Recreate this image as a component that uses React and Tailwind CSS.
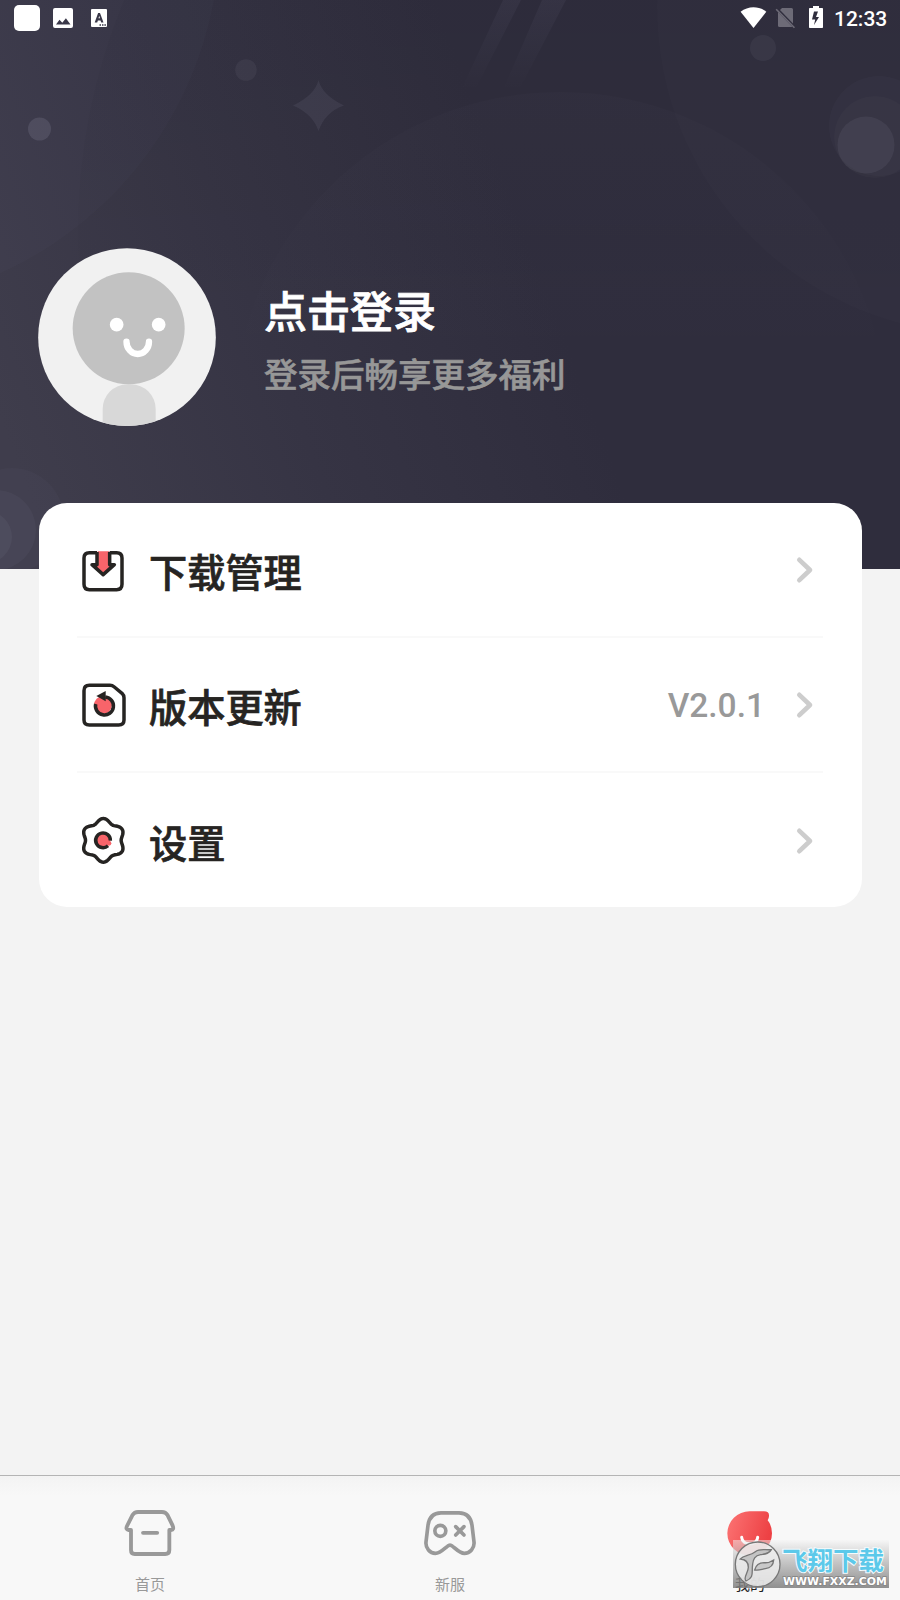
import React from "react";

const CJK = "font-['Roboto','Noto_Sans_CJK_SC',sans-serif]";

const gearPath =
  Array.from({ length: 120 }, (_, i) => {
    const a = (i / 120) * Math.PI * 2;
    const r = 59.5 + 6 * Math.cos(6 * a);
    const x = 130 + r * Math.sin(a);
    const y = 931 - r * Math.cos(a);
    return `${i ? "L" : "M"}${x.toFixed(1)} ${y.toFixed(1)}`;
  }).join("") + "Z";

function StatusBar() {
  return (
    <div className="relative flex h-9 items-center text-white">
      <svg className="ml-3.5 h-9 w-[100px]" viewBox="14 0 100 36" fill="#fff">
        <rect x="14" y="5" width="26" height="26" rx="5" />
        <path fillRule="evenodd" d="M55 8h16a2 2 0 0 1 2 2v16a2 2 0 0 1-2 2H55a2 2 0 0 1-2-2V10a2 2 0 0 1 2-2zM56 24.5h14.5l-4.6-6.3-3.6 4.6-2.8-3z" />
        <path fillRule="evenodd" d="M92 9h14a1 1 0 0 1 1 1v16a1 1 0 0 1-1 1H92a1 1 0 0 1-1-1V10a1 1 0 0 1 1-1zM94.700 22.500h2.500l.7-2h2.600l.7 2h2.300l-3.500-9.500h-1.900zM98.500 18.300l.7-2.500.8 2.500zM99.500 24.300v1.500h1.500v-1.500zM102 24.300v1.500h1.500v-1.500zM104.400 24.300v1.500h1.500v-1.500z" />
      </svg>
      <svg className="ml-auto h-9 w-[84px]" viewBox="740 0 84 36" fill="#fff">
        <path d="M740.600 11.700C748 5.700 759 5.700 766.300 11.700L753.500 28z" />
        <g fill="#6d6b77">
          <path d="M782 8h9.500a1.500 1.500 0 0 1 1.500 1.500V23.500L780 10z" />
          <path d="M778 12l14.500 15H779.500a1.500 1.500 0 0 1-1.500-1.500z" />
          <path d="M775.600 9.800l1.100-1L795 27.200l-1.100 1z" />
        </g>
        <path fillRule="evenodd" d="M813 6h6v2h3.200q.8 0 .8.800v18.400q0 .8-.8.800h-12.400q-.8 0-.8-.8V8.800q0-.8.800-.8h3.200zM814 11.500l-2 8h3.200l-1.200 5.500 5-8h-3l2-5.500z" />
      </svg>
      <span className="ml-2.5 mr-3 w-[54px] whitespace-nowrap pt-0.5 font-['Roboto',sans-serif] text-[21px] font-medium leading-6">12:33</span>
    </div>
  );
}

function Backdrop() {
  return (
    <svg className="absolute left-0 top-0 h-full w-full" viewBox="0 0 900 569">
      <defs>
        <linearGradient id="base" gradientUnits="userSpaceOnUse" x1="0" y1="420" x2="520" y2="220">
          <stop offset="0" stopColor="#3f3d4c" />
          <stop offset=".5" stopColor="#363444" />
          <stop offset="1" stopColor="#2f2d3d" />
        </linearGradient>
        <linearGradient id="stripe" x1="0" y1="0" x2="0" y2="1">
          <stop offset="0" stopColor="#d8d6ff" stopOpacity=".045" />
          <stop offset="1" stopColor="#d8d6ff" stopOpacity="0" />
        </linearGradient>
        <linearGradient id="disc" x1="0" y1="0" x2="0" y2="1">
          <stop offset="0" stopColor="#d8d6ff" stopOpacity=".014" />
          <stop offset=".45" stopColor="#d8d6ff" stopOpacity="0" />
        </linearGradient>
        <linearGradient id="shade" gradientUnits="userSpaceOnUse" x1="0" y1="0" x2="0" y2="330">
          <stop offset="0" stopColor="#000" stopOpacity=".035" />
          <stop offset=".6" stopColor="#000" stopOpacity=".025" />
          <stop offset="1" stopColor="#000" stopOpacity="0" />
        </linearGradient>
      </defs>
      <rect width="900" height="569" fill="url(#base)" />
      <circle cx="-153" cy="-67" r="373" fill="#d8d6ff" fillOpacity=".02" />
      <circle cx="676" cy="230" r="598" fill="url(#shade)" />
      <circle cx="560" cy="419" r="327" fill="url(#disc)" />
      <circle cx="983" cy="8" r="326" fill="#d8d6ff" fillOpacity=".012" />
      <path d="M503 0h18L476 88h-14zM542 0h24L518 92h-16z" fill="url(#stripe)" />
      <g fill="#e8e6ff">
        <circle cx="39.500" cy="129" r="11.500" fillOpacity=".11" />
        <circle cx="246" cy="70" r="10.800" fillOpacity=".05" />
        <circle cx="763" cy="48" r="13" fillOpacity=".05" />
        <path d="M318.500 80Q322 95 344 105.500Q325 112 318.500 131Q313 114 293 105.500Q315 95 318.500 80z" fillOpacity=".065" />
        <circle cx="879" cy="126" r="50" fillOpacity=".022" />
        <circle cx="875" cy="137" r="41" fillOpacity=".018" />
        <circle cx="866" cy="145" r="28.500" fillOpacity=".06" />
        <circle cx="12" cy="520" r="52" fillOpacity=".025" />
        <circle cx="-4" cy="530" r="40" fillOpacity=".035" />
        <circle cx="-14" cy="537" r="26" fillOpacity=".045" />
      </g>
    </svg>
  );
}

function Avatar() {
  return (
    <svg className="h-[178px] w-[178px] shrink-0" viewBox="115 53 534 534">
      <defs>
        <clipPath id="face"><circle cx="382" cy="320.500" r="266.500" /></clipPath>
      </defs>
      <g clipPath="url(#face)">
        <rect x="110" y="50" width="550" height="550" fill="#f1f1f1" />
        <rect x="309" y="462" width="159" height="200" rx="74" fill="#d8d8d8" />
        <circle cx="387" cy="294" r="168" fill="#c2c2c2" />
        <circle cx="351" cy="283" r="20.500" fill="#fff" />
        <circle cx="477" cy="283" r="20.500" fill="#fff" />
        <path d="M380.500 334a33.700 37 0 0 0 67.500 0" fill="none" stroke="#fff" strokeWidth="19" strokeLinecap="round" />
      </g>
    </svg>
  );
}

function DownloadIcon() {
  return (
    <svg className="h-[46px] w-[46px]" viewBox="60 51 138 138" fill="none" stroke="#262422" strokeWidth="10.500" strokeLinejoin="round">
      <path d="M113 64h34v42h12l-30 26-29-26h13z" fill="#f8646a" stroke="none" />
      <path d="M111 68H88Q72 68 72 84V163Q72 179 88 179H170Q186 179 186 163V84Q186 68 170 68H149" />
      <path d="M111 66V104H96L129.500 134L163 104H149V66" />
    </svg>
  );
}

function UpdateIcon() {
  return (
    <svg className="h-[46px] w-[46px]" viewBox="60 456 138 138" fill="none" stroke="#262422" strokeWidth="10.500" strokeLinejoin="round">
      <path d="M88 466H150Q157 466 163 471L186 490Q192 496 192 503V570Q192 585 176 585H88Q72 585 72 570V482Q72 466 88 466Z" />
      <circle cx="129" cy="525" r="27" fill="#f8646a" stroke="none" />
      <path d="M107 522A27 27 0 1 0 136 501" />
      <path d="M109 498L137 483V514Z" fill="#262422" stroke="none" />
    </svg>
  );
}

function SettingsIcon() {
  return (
    <svg className="h-[46px] w-[46px]" viewBox="60 864 138 138" overflow="visible" fill="none" stroke="#262422" strokeWidth="10.500" strokeLinejoin="round">
      <path d={gearPath} />
      <circle cx="129" cy="931" r="22" fill="#f8646a" stroke="none" />
      <circle cx="147" cy="940" r="7" fill="#f8646a" stroke="none" />
      <path d="M151 932A22 22 0 1 0 144 947" />
    </svg>
  );
}

function Chevron() {
  return (
    <svg className="ml-[30px] h-7 w-5" viewBox="464 77 60 84" fill="none" stroke="#cdcdcd" strokeWidth="14" strokeLinecap="round" strokeLinejoin="round">
      <path d="M477 88.500L509 119L477 149.500" />
    </svg>
  );
}

function Row({ icon, label, value, last }) {
  return (
    <div className={`flex h-[135px] items-center pl-[3px] pr-2 ${last ? "" : "border-b-2 border-[#f9f9f9]"}`}>
      {icon}
      <span className="ml-[23px] pt-2.5 text-[38.200px] font-medium leading-none text-[#262422] [-webkit-text-stroke:0.700px_#262422]">{label}</span>
      <span className="ml-auto pt-0.5 font-['Roboto',sans-serif] text-[33.500px] font-medium leading-none text-[#999]">{value}</span>
      <Chevron />
    </div>
  );
}

function HomeIcon() {
  return (
    <svg className="h-[50px] w-[54px]" viewBox="69 144 162 150" fill="none" stroke="#999" strokeWidth="11.500" strokeLinejoin="round" strokeLinecap="round">
      <path d="M114 156H186Q197 156 203 166L218 197Q223 209 213 210H208V270Q208 282 196 282H104Q93 282 93 270V210H86Q76 208 81 198L97 166Q103 156 114 156Z" />
      <path d="M129 218.500H171.500" />
    </svg>
  );
}

function GamepadIcon() {
  return (
    <svg className="h-[50px] w-[54px]" viewBox="969 144 162 150" fill="none" stroke="#999" strokeWidth="11" strokeLinejoin="round" strokeLinecap="round">
      <path d="M1023 158.500H1077C1100 158.500 1113 173 1116 196L1122 246C1124 265 1110 280 1093 280C1080 280 1068 267 1058 259Q1050 252 1042 259C1031 268 1020 280 1006 280C990 280 976 265 978 246L984 196C987 173 1000 158.500 1023 158.500Z" />
      <circle cx="1021" cy="212.500" r="16.500" />
      <path d="M1067 200L1092 225M1092 200L1067 225" />
    </svg>
  );
}

function MineIcon() {
  return (
    <svg className="h-[50px] w-[54px]" viewBox="69 84 162 150" fill="none">
      <defs>
        <linearGradient id="red" x1="0" y1="0" x2="1" y2="0.300">
          <stop offset="0" stopColor="#fc7474" />
          <stop offset="1" stopColor="#ed4144" />
        </linearGradient>
      </defs>
      <path d="M149 94H192Q208 94 207 108Q207 114 203 121Q216 137 216 160A67 66 0 1 1 149 94Z" fill="url(#red)" />
      <path d="M125 172C127 198 171 198 173 172" stroke="#fff" strokeWidth="9" strokeLinecap="round" />
    </svg>
  );
}

function Tab({ icon, label, active }) {
  return (
    <div className="flex flex-col items-center pt-8">
      {icon}
      <span className={`mt-4 text-[15px] leading-[22px] ${active ? "text-[#222]" : "text-[#999]"}`}>{label}</span>
    </div>
  );
}

function Watermark() {
  return (
    <div className="absolute left-[733px] top-[1540px] h-12 w-[156px] bg-linear-to-b from-[#f4f4f4]/50 to-[#7d7d7d]/85">
      <svg className="absolute left-0 top-0 h-12 w-12" viewBox="99 180 144 144" fill="none">
        <circle cx="173" cy="253" r="67" fill="#ededed" fillOpacity=".85" stroke="#777" strokeWidth="4" />
        <path d="M121 237C132 225 150 228 166 215C180 204 196 211 214 209C208 221 196 222 182 224C164 227 160 237 158 252C154 278 164 292 138 303C128 293 145 278 145 262C145 246 138 238 121 237Z" fill="#c4c4c4" stroke="#777" strokeWidth="4" />
        <path d="M164 270C168 254 178 248 192 248C206 250 212 246 221 240C220 258 210 264 196 266C184 268 178 272 164 270Z" fill="#c9c9c9" stroke="#777" strokeWidth="4" />
      </svg>
      <span className="absolute left-[49px] top-[5px] whitespace-nowrap font-['Noto_Sans_CJK_SC',sans-serif] text-[25.500px] font-bold leading-[28px] text-[#5cc9ea] [paint-order:stroke_fill] [-webkit-text-stroke:2px_#f4fbfd]">飞翔下载</span>
      <span className="absolute left-[50px] top-[35px] origin-left scale-x-[1.040] whitespace-nowrap font-['DejaVu_Sans',sans-serif] text-[10.500px] font-bold leading-3 text-white [paint-order:stroke_fill] [-webkit-text-stroke:1.500px_#858585]">WWW.FXXZ.COM</span>
    </div>
  );
}

export default function App() {
  return (
    <div className={`relative flex h-[1600px] w-[900px] flex-col overflow-hidden bg-[#f3f3f3] ${CJK}`} lang="zh-CN">
      <header className="relative h-[569px] shrink-0">
        <Backdrop />
        <StatusBar />
        <div className="relative mt-[212px] flex items-center pl-[38px]">
          <Avatar />
          <div className="ml-12 whitespace-nowrap pt-3 font-medium">
            <h1 className="text-[43px] leading-[60px] text-white [-webkit-text-stroke:0.800px_#fff]">点击登录</h1>
            <p className="mt-1.5 text-[33.500px] leading-[54px] text-[#979797] [-webkit-text-stroke:0.600px_#979797]">登录后畅享更多福利</p>
          </div>
        </div>
      </header>
      <main className="relative mx-[38.500px] -mt-[66px] h-[404px] shrink-0 rounded-[28px] bg-white px-[38.500px]">
        <Row icon={<DownloadIcon />} label="下载管理" />
        <Row icon={<UpdateIcon />} label="版本更新" value="V2.0.1" />
        <Row icon={<SettingsIcon />} label="设置" last />
      </main>
      <nav className="mt-auto grid h-[125px] shrink-0 grid-cols-3 border-t border-[#b4b4b4] bg-[#f8f8f8] bg-[linear-gradient(#f3f3f3,#f8f8f8_20px)]">
        <Tab icon={<HomeIcon />} label="首页" />
        <Tab icon={<GamepadIcon />} label="新服" />
        <Tab icon={<MineIcon />} label="我的" active />
      </nav>
      <Watermark />
    </div>
  );
}
